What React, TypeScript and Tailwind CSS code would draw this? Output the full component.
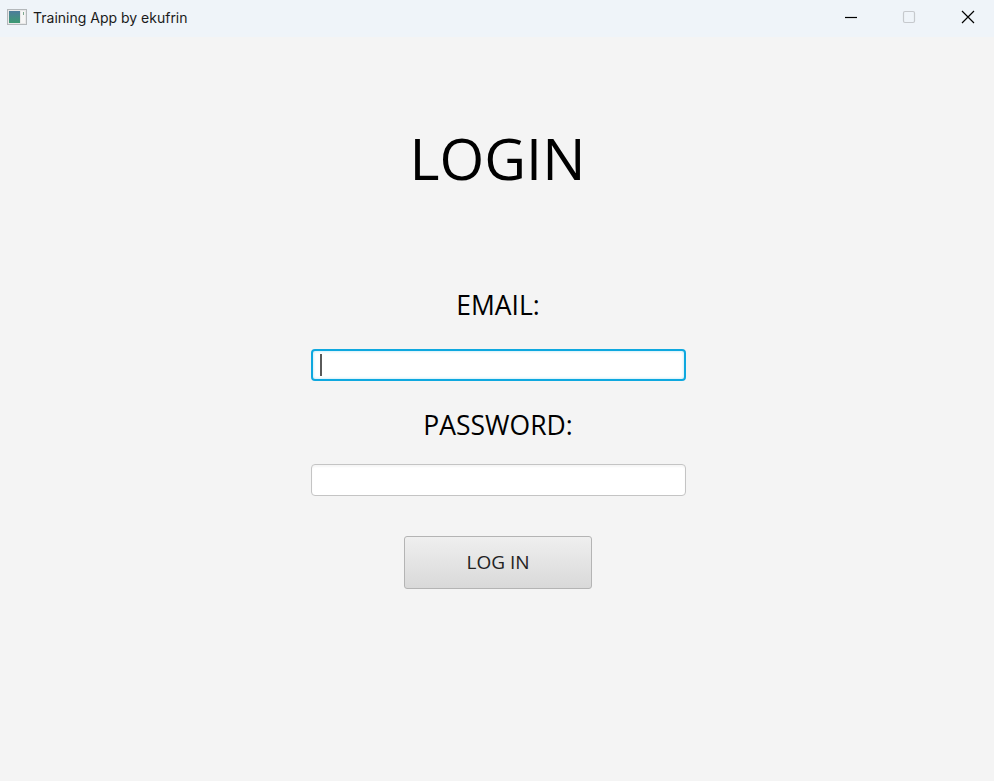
export default function App() {
  return (
    <div className="h-[781px] w-[994px] overflow-hidden bg-[#f4f4f4] font-['Open_Sans',sans-serif]">
      <header className="flex h-[37px] items-center bg-[#eff4f9] pl-[7px]">
        <svg width="20" height="16" viewBox="0 0 20 16" className="mb-[3px] shrink-0">
          <defs>
            <linearGradient id="appIcon" x1="0" y1="0" x2="0" y2="1">
              <stop offset="0" stopColor="#4d7c9c" />
              <stop offset="1" stopColor="#3c9a72" />
            </linearGradient>
          </defs>
          <rect x="0.5" y="0.5" width="19" height="15" fill="#e8e8e8" stroke="#b4b8bb" />
          <rect x="2" y="2" width="11" height="12" fill="url(#appIcon)" />
          <rect x="14" y="2" width="4" height="12" fill="#f6f6f6" />
          <rect x="16" y="3" width="1" height="3" fill="#7fa890" />
        </svg>
        <span className="mb-[2px] ml-[6px] font-['Inter',sans-serif] text-[14px] text-[#1a1a1a]">Training App by ekufrin</span>
        <div className="ml-auto flex items-start self-start">
          <button className="flex h-[34px] w-[58px] items-center justify-center">
            <svg width="14" height="14" viewBox="0 0 14 14">
              <path d="M1 7.5h12" stroke="#000" strokeWidth="1.2" />
            </svg>
          </button>
          <button className="flex h-[34px] w-[58px] items-center justify-center">
            <svg width="14" height="14" viewBox="0 0 14 14">
              <rect x="1.5" y="1.5" width="11" height="11" rx="1.5" fill="none" stroke="#c6c9cd" strokeWidth="1.2" />
            </svg>
          </button>
          <button className="ml-[4px] flex h-[34px] w-[52px] items-center justify-center">
            <svg width="14" height="14" viewBox="0 0 14 14">
              <path d="M1 1l12 12M13 1L1 13" stroke="#000" strokeWidth="1.2" />
            </svg>
          </button>
        </div>
      </header>

      <main className="flex flex-col items-center pl-[2px]">
        <h1 className="mt-[75px] -ml-[1px] text-[57.5px] leading-[92px] text-black">LOGIN</h1>
        <label className="mt-[83px] text-[26.5px] leading-[36px] text-black">EMAIL:</label>
        <div className="mt-[26px] flex h-[32px] w-[375px] items-center rounded-[4px] border-2 border-[#0ea8df] bg-white pl-[7px] shadow-[inset_0_0_3px_rgba(14,168,223,0.35)]">
          <div className="h-[22px] w-[2px] bg-[#5a5a5a]" />
        </div>
        <label className="mt-[26px] text-[26.5px] leading-[36px] text-black">PASSWORD:</label>
        <div className="mt-[21px] h-[32px] w-[375px] rounded-[4px] border border-[#c4c4c4] bg-white shadow-[inset_0_2px_2px_rgba(0,0,0,0.04)]" />
        <button className="mt-[40px] h-[53px] w-[188px] rounded-[3px] border border-[#b4b4b4] bg-gradient-to-b from-[#efefef] to-[#d9d9d9] text-[19px] text-[#222]">
          LOG IN
        </button>
      </main>
    </div>
  )
}
